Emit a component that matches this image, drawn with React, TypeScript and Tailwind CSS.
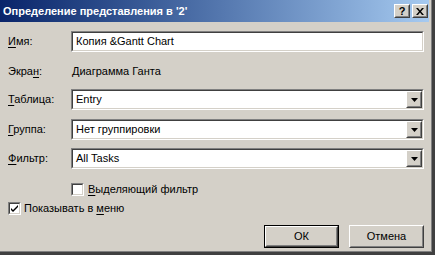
import React from 'react';

const font = { fontFamily: '"Liberation Sans", Arial, sans-serif' };

const Sunken: React.FC<{ className?: string; children?: React.ReactNode }> = ({ className = '', children }) => (
  <div className={`border border-t-[#808080] border-l-[#808080] border-b-white border-r-white ${className}`}>
    <div className="h-full w-full border border-t-[#404040] border-l-[#404040] border-b-[#d4d0c8] border-r-[#d4d0c8] bg-white">
      {children}
    </div>
  </div>
);

const Raised: React.FC<{ className?: string; children?: React.ReactNode }> = ({ className = '', children }) => (
  <div className={`border border-t-white border-l-white border-b-[#404040] border-r-[#404040] bg-[#d4d0c8] ${className}`}>
    <div className="flex h-full w-full items-center justify-center border border-t-[#d4d0c8] border-l-[#d4d0c8] border-b-[#808080] border-r-[#808080]">
      {children}
    </div>
  </div>
);

const TextField: React.FC<{ value: string }> = ({ value }) => (
  <Sunken className="h-[21px] w-[353px]">
    <div className="flex h-full items-center pl-[3px] text-[11px] text-black">{value}</div>
  </Sunken>
);

const Select: React.FC<{ value: string }> = ({ value }) => (
  <Sunken className="h-[21px] w-[353px]">
    <div className="flex h-full items-center justify-between">
      <span className="pl-[3px] text-[11px] text-black">{value}</span>
      <Raised className="h-[17px] w-[16px]">
        <svg width="7" height="4" viewBox="0 0 7 4">
          <path d="M0 0h7L3.5 4z" fill="#000" />
        </svg>
      </Raised>
    </div>
  </Sunken>
);

const CheckBox: React.FC<{ checked?: boolean }> = ({ checked }) => (
  <Sunken className="h-[13px] w-[13px] shrink-0">
    {checked && (
      <svg width="9" height="9" viewBox="0 0 9 9" className="block">
        <path d="M1 4l2 2 5-5v2L3 8 1 6z" fill="#000" />
      </svg>
    )}
  </Sunken>
);

const Label: React.FC<{ pre?: string; u: string; post: string }> = ({ pre = '', u, post }) => (
  <span className="w-[63px] shrink-0 text-[11px] text-black">
    {pre}
    <span className="underline underline-offset-2">{u}</span>
    {post}
  </span>
);

export default function App() {
  return (
    <div style={font} className="h-[255px] w-[435px] overflow-hidden bg-[#d4d0c8]">
      <div className="h-[255px] w-[435px] border-r-[3px] border-b-[3px] border-r-[#404040] border-b-[#404040]">
        <div className="h-full w-full border-r border-b border-r-[#808080] border-b-[#808080]">
          <div className="flex h-full flex-col pr-[2px]">
            <div className="flex h-[22px] items-center justify-between bg-gradient-to-r from-[#0a246a] to-[#a6caf0] pl-[3px] pr-[1px]">
              <span className="text-[11px] font-bold text-white">Определение представления в '2'</span>
              <div className="flex gap-[2px]">
                <Raised className="h-[14px] w-[16px]">
                  <span className="text-[11px] font-bold leading-none text-black">?</span>
                </Raised>
                <Raised className="h-[14px] w-[16px]">
                  <svg width="8" height="7" viewBox="0 0 8 7">
                    <path d="M0 0h2l2 2.5L6 0h2L5 3.5 8 7H6L4 4.5 2 7H0l3-3.5z" fill="#000" />
                  </svg>
                </Raised>
              </div>
            </div>

            <div className="flex flex-col pl-[8px] pt-[9px]">
              <div className="flex items-center">
                <Label u="И" post="мя:" />
                <TextField value="Копия &Gantt Chart" />
              </div>
              <div className="mt-[9px] flex h-[20px] items-center">
                <Label pre="Экра" u="н" post=":" />
                <span className="pl-[1px] text-[11px] text-black">Диаграмма Ганта</span>
              </div>
              <div className="mt-[8px] flex items-center">
                <Label u="Т" post="аблица:" />
                <Select value="Entry" />
              </div>
              <div className="mt-[9px] flex items-center">
                <Label u="Г" post="руппа:" />
                <Select value="Нет группировки" />
              </div>
              <div className="mt-[8px] flex items-center">
                <Label u="Ф" post="ильтр:" />
                <Select value="All Tasks" />
              </div>
              <div className="mt-[14px] flex h-[13px] items-center pl-[63px]">
                <CheckBox />
                <span className="pl-[4px] text-[11px] leading-none text-black">
                  <span className="underline underline-offset-2">В</span>ыделяющий фильтр
                </span>
              </div>
              <div className="mt-[6px] flex h-[13px] items-center">
                <CheckBox checked />
                <span className="pl-[3px] text-[11px] leading-none text-black">
                  Показывать в <span className="underline underline-offset-2">м</span>еню
                </span>
              </div>
              <div className="mt-[10px] flex justify-end gap-[10px] pr-[5px]">
                <div className="h-[23px] w-[75px] border border-black">
                  <Raised className="h-full w-full">
                    <span className="text-[11px] text-black">ОК</span>
                  </Raised>
                </div>
                <Raised className="h-[23px] w-[75px]">
                  <span className="text-[11px] text-black">Отмена</span>
                </Raised>
              </div>
            </div>
          </div>
        </div>
      </div>
    </div>
  );
}
